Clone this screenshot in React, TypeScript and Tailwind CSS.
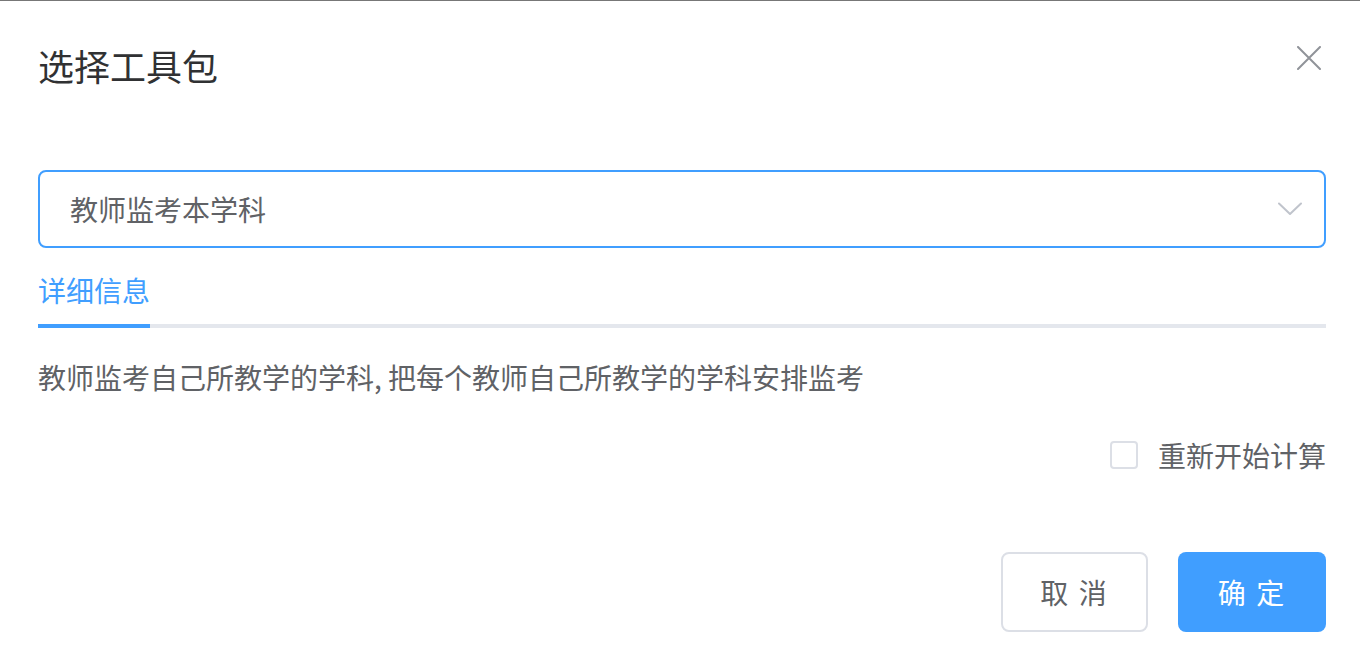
const FONT = { fontFamily: '"Noto Sans CJK SC", "Noto Sans", sans-serif' };

function ChevronDown() {
  return (
    <svg aria-hidden="true" viewBox="0 0 24 14" className="h-[14px] w-[24px]" fill="none">
      <path d="M1 1.5L12 12L23 1.5" stroke="#c0c4cc" strokeWidth="2" strokeLinecap="round" strokeLinejoin="round" />
    </svg>
  );
}

function CloseIcon() {
  return (
    <svg aria-hidden="true" viewBox="0 0 24 24" className="h-[24px] w-[24px]" fill="none">
      <path d="M1 1L23 23M23 1L1 23" stroke="#909399" strokeWidth="2" strokeLinecap="round" />
    </svg>
  );
}

export default function App() {
  return (
    <div className="min-h-[662px] w-[1360px] bg-white" style={FONT}>
      <div className="h-px bg-[#777777]" />

      <div className="pl-[38px] pr-[34px]">
        <div className="flex items-start justify-between pt-[40px]">
          <h2 className="text-[36px] leading-[48px] text-[#303133]">选择工具包</h2>
          <button type="button" className="mr-[5px] mt-[5px]" aria-label="close">
            <CloseIcon />
          </button>
        </div>

        <div className="mt-[81px] flex h-[78px] items-center justify-between rounded-[8px] border-2 border-[#409eff] pl-[30px] pr-[22px]">
          <span className="text-[28px] leading-[40px] text-[#606266]">教师监考本学科</span>
          <ChevronDown />
        </div>

        <div className="relative h-[80px]">
          <div className="absolute bottom-0 left-0 right-0 h-[4px] bg-[#e4e7ed]" />
          <div className="pt-[22px] text-[28px] leading-[40px] text-[#409eff]">
            <span className="relative inline-block">
              详细信息
              <span className="absolute -bottom-[18px] left-0 right-0 h-[4px] bg-[#409eff]" />
            </span>
          </div>
        </div>

        <p className="mt-[29px] text-[28px] leading-[40px] text-[#606266]">
          教师监考自己所教学的学科, 把每个教师自己所教学的学科安排监考
        </p>

        <div className="mt-[38px] flex items-center justify-end gap-[20px]">
          <span className="h-[28px] w-[28px] rounded-[4px] border-2 border-[#dcdfe6] bg-white" />
          <span className="text-[28px] leading-[40px] text-[#606266]">重新开始计算</span>
        </div>

        <div className="mt-[77px] flex justify-end gap-[30px]">
          <button
            type="button"
            className="h-[80px] w-[147px] rounded-[8px] border-2 border-[#dcdfe6] bg-white text-[28px] tracking-[2px] text-[#606266]"
          >
            取 消
          </button>
          <button
            type="button"
            className="h-[80px] w-[148px] rounded-[8px] bg-[#409eff] text-[28px] tracking-[2px] text-white"
          >
            确 定
          </button>
        </div>
      </div>
    </div>
  );
}
